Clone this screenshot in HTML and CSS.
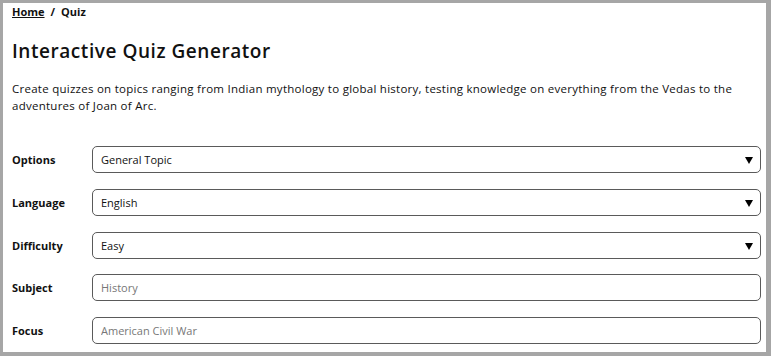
FILE: index.html
```html
<!DOCTYPE html>
<html lang="en">
<head>
<meta charset="utf-8">
<title>Interactive Quiz Generator</title>
<link rel="stylesheet" href="styles.css">
</head>
<body>
<div class="window">
  <nav class="crumb"><a href="#" class="crumb-link">Home</a><span class="crumb-sep">/</span><span>Quiz</span></nav>
  <h1 class="title">Interactive Quiz Generator</h1>
  <p class="intro">Create quizzes on topics ranging from Indian mythology to global history, testing knowledge on everything from the Vedas to the adventures of Joan of Arc.</p>
  <form class="form">
    <label class="label" for="opt">Options</label>
    <div class="field">
      <select id="opt" class="control select"><option>General Topic</option></select>
      <svg class="arrow" viewBox="0 0 8 7" width="8" height="7"><path d="M0 0H8L4 7Z" fill="#000"/></svg>
    </div>
    <label class="label" for="lang">Language</label>
    <div class="field">
      <select id="lang" class="control select"><option>English</option></select>
      <svg class="arrow" viewBox="0 0 8 7" width="8" height="7"><path d="M0 0H8L4 7Z" fill="#000"/></svg>
    </div>
    <label class="label" for="diff">Difficulty</label>
    <div class="field">
      <select id="diff" class="control select"><option>Easy</option></select>
      <svg class="arrow" viewBox="0 0 8 7" width="8" height="7"><path d="M0 0H8L4 7Z" fill="#000"/></svg>
    </div>
    <label class="label" for="subj">Subject</label>
    <div class="field"><input id="subj" class="control" type="text" placeholder="History"></div>
    <label class="label" for="focus">Focus</label>
    <div class="field"><input id="focus" class="control" type="text" placeholder="American Civil War"></div>
  </form>
</div>
</body>
</html>
```
FILE: styles.css
```css
html, body {
  margin: 0;
  padding: 0;
}
body {
  background: #a6a6a6;
  font-family: "Open Sans", "Noto Sans", sans-serif;
  color: #111;
}
.window {
  margin: 3px 5px 4px 3px;
  height: 349px;
  background: #fff;
  padding: 1px 5px 0 9px;
  box-sizing: border-box;
  overflow: hidden;
}
.crumb {
  font-size: 11px;
  font-weight: 700;
  line-height: 16px;
  display: flex;
  gap: 6px;
}
.crumb-link {
  color: #111;
  text-decoration: underline;
}
.title {
  margin: 18px 0 0;
  font-size: 19px;
  font-weight: 600;
  letter-spacing: 0.55px;
  line-height: 26px;
}
.intro {
  margin: 16px 0 0;
  font-size: 11.5px;
  line-height: 17px;
  letter-spacing: 0.26px;
  padding-right: 20px;
}
.form {
  margin-top: 32px;
  display: grid;
  grid-template-columns: 80px 1fr;
  row-gap: 15.75px;
  align-items: center;
}
.label {
  font-size: 11px;
  font-weight: 700;
}
.field {
  position: relative;
  height: 27px;
}
.control {
  width: 100%;
  height: 27px;
  box-sizing: border-box;
  border: 1px solid #5a5a5a;
  border-radius: 5px;
  background: #fff;
  padding: 0 8px;
  font-family: inherit;
  font-size: 11px;
  color: #111;
  outline: none;
  margin: 0;
}
.select {
  appearance: none;
  -webkit-appearance: none;
}
.control::placeholder {
  color: #777;
}
.arrow {
  position: absolute;
  right: 8px;
  top: 11px;
  pointer-events: none;
}
```
